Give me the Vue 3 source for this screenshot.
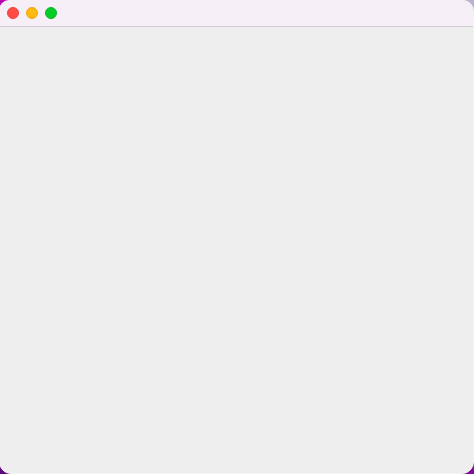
<script setup>
const controls = ['close', 'minimize', 'zoom']
</script>

<template>
  <div class="desktop">
    <main class="window">
      <header class="titlebar">
        <span v-for="c in controls" :key="c" class="light" :class="c"></span>
      </header>
      <section class="content"></section>
    </main>
  </div>
</template>

<style>
body {
  margin: 0;
}
</style>

<style scoped>
.desktop {
  width: 100vw;
  height: 100vh;
  overflow: hidden;
  background:
    linear-gradient(#b5b3d1, #b5b3d1) 100% 0 / 20px 20px no-repeat,
    linear-gradient(#b505b0, #b505b0) 0 0 / 20px 20px no-repeat,
    linear-gradient(#7c0c9a, #7c0c9a) 100% 100% / 20px 20px no-repeat,
    #5c087f;
}

.window {
  box-sizing: border-box;
  display: flex;
  flex-direction: column;
  width: calc(100% + 1px);
  height: 100%;
  margin-left: -1px;
  overflow: hidden;
  border: 1px solid #f5f1f6;
  border-radius: 10px 11px 12px 12px;
  background: #eee;
}

.titlebar {
  box-sizing: border-box;
  display: flex;
  flex: none;
  align-items: center;
  gap: 7px;
  height: 26px;
  padding: 0 7px 1px;
  border-bottom: 1px solid #d1ced2;
  background: #f7eff7;
}

.light {
  box-sizing: border-box;
  width: 12px;
  height: 12px;
  border: 1px solid;
  border-radius: 50%;
}

.close {
  border-color: #e6443e;
  background: #ff4b43;
}

.minimize {
  border-color: #eba514;
  background: #ffb90f;
}

.zoom {
  border-color: #05b825;
  background: #05cc28;
}

.content {
  flex: 1;
  background: #eee;
}
</style>
